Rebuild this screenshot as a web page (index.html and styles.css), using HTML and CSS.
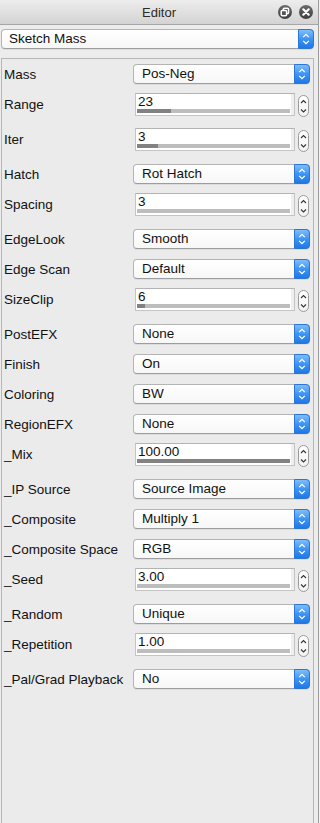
FILE: index.html
```html
<!DOCTYPE html>
<html lang="en">
<head>
  <meta charset="UTF-8" />
  <title>Editor</title>
  <meta name="viewport" content="width=device-width, initial-scale=1.0"/>
  <link rel="stylesheet" href="styles.css">
</head>
<body>

  <div class="window">
    <!-- Title bar -->
    <div class="titlebar">
      <span class="title">Editor</span>
      <div class="win-buttons">
        <span class="win-btn">
          <svg width="14" height="14" viewBox="0 0 14 14">
            <rect x="5.2" y="3.2" width="5.4" height="5.4" rx="1.2" fill="none" stroke="#fff" stroke-width="1.5"/>
            <rect x="3.2" y="5.4" width="5.4" height="5.4" rx="1.2" fill="#555" stroke="#fff" stroke-width="1.5"/>
          </svg>
        </span>
        <span class="win-btn">
          <svg width="14" height="14" viewBox="0 0 14 14">
            <path d="M4.3 4.3 L9.7 9.7 M9.7 4.3 L4.3 9.7" stroke="#fff" stroke-width="2.2" stroke-linecap="round"/>
          </svg>
        </span>
      </div>
    </div>

    <!-- Preset picker -->
    <div class="preset">
      <div class="popup popup-wide">
        <span class="popup-text">Sketch Mass</span>
        <span class="popup-arrows"></span>
      </div>
    </div>

    <!-- Parameters -->
    <div class="panel" id="params"></div>
  </div>

  <script>
    const arrowsSvg = `
      <svg width="15" height="20" viewBox="0 0 15 20">
        <path d="M4.5 8 L7.5 5 L10.5 8 M4.5 12 L7.5 15 L10.5 12" fill="none" stroke="#fff" stroke-width="1.4"/>
      </svg>`;

    const stepperSvg = `
      <svg width="9" height="20" viewBox="0 0 9 20">
        <path d="M2 7 L4.5 4.5 L7 7 M2 13.5 L4.5 16 L7 13.5" fill="none" stroke="#333" stroke-width="1.1"/>
      </svg>`;

    const params = [
      { label: "Mass", type: "popup", value: "Pos-Neg" },
      { label: "Range", type: "field", value: "23", fill: 22 },
      { label: "Iter", type: "field", value: "3", fill: 14 },
      { label: "Hatch", type: "popup", value: "Rot Hatch" },
      { label: "Spacing", type: "field", value: "3", fill: 0 },
      { label: "EdgeLook", type: "popup", value: "Smooth" },
      { label: "Edge Scan", type: "popup", value: "Default" },
      { label: "SizeClip", type: "field", value: "6", fill: 5 },
      { label: "PostEFX", type: "popup", value: "None" },
      { label: "Finish", type: "popup", value: "On" },
      { label: "Coloring", type: "popup", value: "BW" },
      { label: "RegionEFX", type: "popup", value: "None" },
      { label: "_Mix", type: "field", value: "100.00", fill: 100 },
      { label: "_IP Source", type: "popup", value: "Source Image" },
      { label: "_Composite", type: "popup", value: "Multiply 1" },
      { label: "_Composite Space", type: "popup", value: "RGB" },
      { label: "_Seed", type: "field", value: "3.00", fill: 0 },
      { label: "_Random", type: "popup", value: "Unique" },
      { label: "_Repetition", type: "field", value: "1.00", fill: 0 },
      { label: "_Pal/Grad Playback", type: "popup", value: "No" }
    ];

    function buildParams() {
      const panel = document.getElementById('params');
      params.forEach(p => {
        const row = document.createElement('div');
        row.className = `param-row ${p.type === 'field' ? 'row-field' : 'row-popup'}`;
        let control;
        if (p.type === 'popup') {
          control = `
            <div class="popup">
              <span class="popup-text">${p.value}</span>
              <span class="popup-arrows">${arrowsSvg}</span>
            </div>`;
        } else {
          control = `
            <div class="slider-field">
              <div class="field">
                <span class="field-text">${p.value}</span>
                <div class="track"><div class="track-fill" style="width: ${p.fill}%"></div></div>
              </div>
              <span class="stepper">${stepperSvg}</span>
            </div>`;
        }
        row.innerHTML = `<span class="param-label">${p.label}</span>${control}`;
        panel.appendChild(row);
      });
    }

    // Init
    document.querySelector('.preset .popup-arrows').innerHTML = arrowsSvg;
    buildParams();
  </script>

</body>
</html>
```

FILE: styles.css
```css
* {
  box-sizing: border-box;
}

body {
  margin: 0;
  font-family: 'Liberation Sans', Arial, sans-serif;
  font-size: 13.5px;
  color: #111;
  background-color: #f2f2f2;
  height: 100vh;
  overflow: hidden;
}

.window {
  width: 319px;
  height: 100vh;
  background-color: #ececec;
  border-right: 1px solid #9c9c9c;
  display: flex;
  flex-direction: column;
}

/* TITLE BAR */
.titlebar {
  height: 25px;
  flex-shrink: 0;
  display: flex;
  align-items: center;
  justify-content: center;
  position: relative;
  background: linear-gradient(to bottom, #ededed, #d3d3d3);
  border-bottom: 1px solid #a6a6a6;
}

.title {
  font-size: 13px;
  color: #2b2b2b;
}

.win-buttons {
  position: absolute;
  right: 5px;
  top: 5px;
  display: flex;
  gap: 7px;
}

.win-btn {
  width: 14px;
  height: 14px;
  border-radius: 50%;
  background: linear-gradient(to bottom, #6b6b6b, #3f3f3f);
  display: flex;
}

/* POPUP BUTTONS */
.preset {
  padding: 4px 4px 0 1px;
  flex-shrink: 0;
}

.popup {
  width: 177px;
  height: 20px;
  display: flex;
  align-items: center;
  background: linear-gradient(to bottom, #ffffff, #f7f7f7);
  border: 1px solid #b4b4b4;
  border-bottom-color: #9d9d9d;
  border-radius: 4px;
  box-shadow: 0 1px 0 rgba(0, 0, 0, 0.06);
}

.popup-wide {
  width: 100%;
}

.popup-text {
  flex: 1;
  padding-left: 8px;
  line-height: 18px;
  white-space: nowrap;
}

.popup-wide .popup-text {
  padding-left: 7px;
}

.popup-arrows {
  width: 16px;
  height: 20px;
  margin: -1px -1px -1px 0;
  display: flex;
  align-items: center;
  justify-content: center;
  border-radius: 0 4px 4px 0;
  background: linear-gradient(to bottom, #7dbefc, #3d94f5 50%, #1f78e6);
  border: 1px solid #2c76d6;
}

/* PARAMETER PANEL */
.panel {
  flex: 1;
  margin: 9px 4px 0 1px;
  border: 1px solid #b7b7b7;
  border-bottom: none;
  background-color: #ebebeb;
  padding-left: 1px;
}

.param-row {
  display: flex;
  align-items: center;
}

.row-popup {
  height: 30px;
}

.row-field {
  height: 35px;
  padding-bottom: 4px;
}

.param-label {
  width: 130px;
  flex-shrink: 0;
  padding-left: 1px;
  white-space: nowrap;
}

/* SLIDER FIELDS */
.slider-field {
  display: flex;
  align-items: center;
  margin-left: 2px;
}

.field {
  width: 160px;
  height: 23px;
  background-color: #fff;
  border: 1px solid #c4c4c4;
  border-top-color: #b3b3b3;
  box-shadow: inset -3px 0 0 #efefef;
  display: flex;
  flex-direction: column;
}

.field-text {
  line-height: 15px;
  padding-left: 2px;
}

.track {
  height: 4px;
  margin: 0 4px 0 1px;
  background-color: #bdbdbd;
}

.track-fill {
  height: 100%;
  background-color: #828282;
}

.stepper {
  width: 11px;
  height: 22px;
  margin: 2px 0 0 3px;
  border: 1px solid #9a9a9a;
  border-radius: 6px;
  background: linear-gradient(to bottom, #ffffff, #f3f3f3);
  display: flex;
  justify-content: center;
}
```
